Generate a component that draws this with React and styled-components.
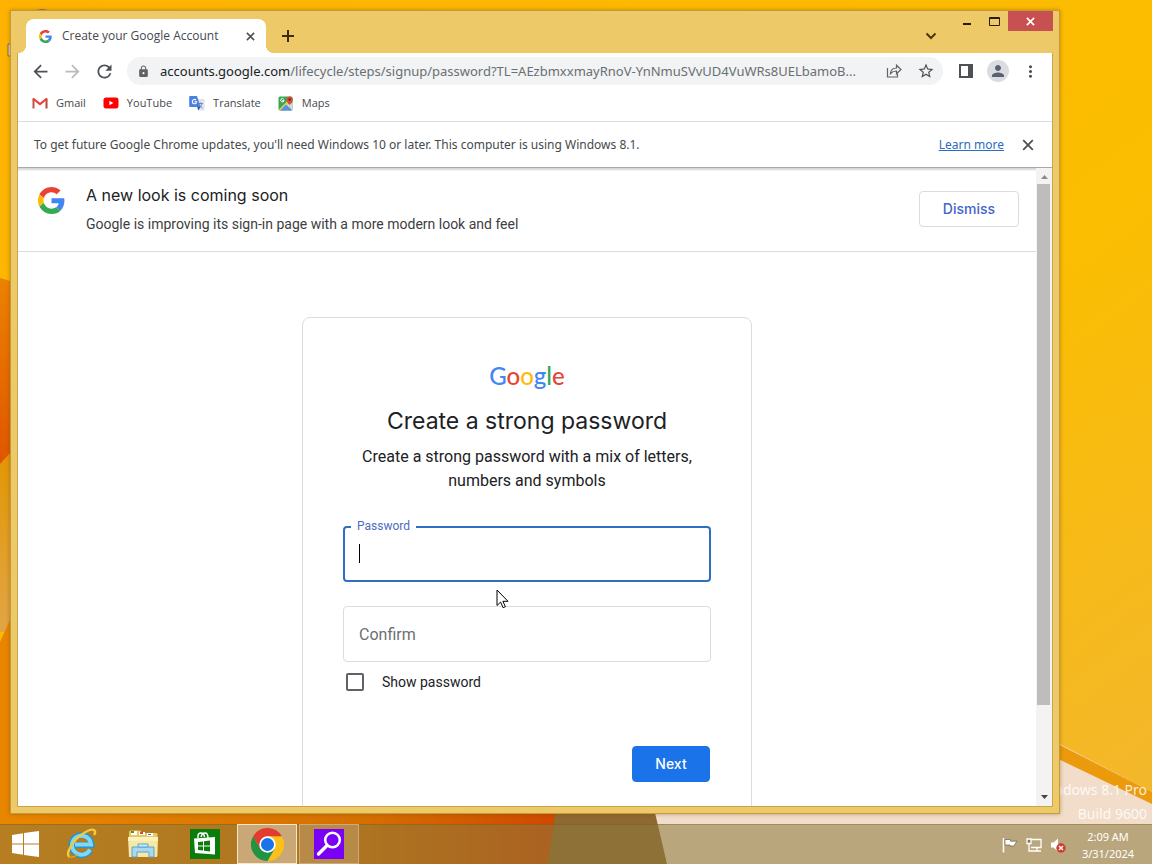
import { useState } from 'react';
import styled, { createGlobalStyle } from 'styled-components';
import { MdStarBorder, MdLock, MdMoreVert, MdPerson, MdRefresh, MdArrowBack, MdArrowForward } from 'react-icons/md';

const ui = `"Noto Sans", "Open Sans", sans-serif`;
const uiSmall = `"Open Sans", "Noto Sans", sans-serif`;
const product = `Inter, Roboto, sans-serif`;

const GlobalStyle = createGlobalStyle`
  * { box-sizing: border-box; }
  body { margin: 0; font-family: Roboto, sans-serif; color: #202124; }
  button { font: inherit; color: inherit; border: 0; padding: 0; background: none; }
  h1, h2, p { margin: 0; font-weight: 400; }
`;

const Desktop = styled.div`
  position: relative;
  display: flex;
  flex-direction: column;
  justify-content: flex-end;
  height: 100vh;
  overflow: hidden;
  background: #fbb800;
`;

const Wallpaper = styled.svg`
  position: absolute;
  inset: 0;
  width: 100%;
  height: 100%;
`;

const Watermark = styled.div`
  position: absolute;
  right: 5px;
  bottom: 38px;
  font: 14px/24px ${ui};
  text-align: right;
  color: rgba(255, 255, 255, 0.85);
`;

/* ---- browser window ---- */

const Window = styled.main`
  position: absolute;
  inset: 10px 92px 50px 10px;
  display: flex;
  flex-direction: column;
  padding: 0 7px 7px;
  background: #edc968;
  border: 1px solid #c39a3f;
  box-shadow: 0 0 4px rgba(110, 70, 0, 0.45);
`;

const TitleBar = styled.header`
  display: flex;
  align-items: flex-end;
  height: 42px;
  flex: none;
  padding-left: 8px;
`;

const Tab = styled.div`
  position: relative;
  display: flex;
  align-items: center;
  width: 240px;
  height: 34px;
  padding: 0 9px 0 13px;
  gap: 10px;
  background: #fff;
  border-radius: 8px 8px 0 0;
  font: 12px/16px ${uiSmall};
  color: #45494d;

  &::before, &::after {
    content: '';
    position: absolute;
    bottom: 0;
    width: 8px;
    height: 8px;
  }
  &::before { left: -8px; background: radial-gradient(circle at 0 0, transparent 8px, #fff 8px); }
  &::after { right: -8px; background: radial-gradient(circle at 100% 0, transparent 8px, #fff 8px); }
`;

const TabTitle = styled.span`
  flex: 1;
  white-space: nowrap;
`;

const IconButton = styled.button`
  display: flex;
  align-items: center;
  justify-content: center;
  flex: none;
  width: ${(p) => p.$w || 32}px;
  height: ${(p) => p.$h || 28}px;
  color: ${(p) => p.$color || '#4d5156'};
`;

const Caption = styled.div`
  display: flex;
  align-self: flex-start;
  margin: 0 -1px 0 8px;
`;

const CaptionButton = styled(IconButton)`
  background: ${(p) => (p.$close ? '#c75050' : 'none')};
`;

const Spacer = styled.div`
  flex: 1;
`;

const Client = styled.div`
  display: flex;
  flex-direction: column;
  flex: 1;
  min-height: 0;
  background: #fff;
  outline: 1px solid #c9a44c;
  clip-path: inset(0 -1px -1px -1px);
`;

const Toolbar = styled.nav`
  display: flex;
  align-items: center;
  flex: none;
  height: 36px;
  padding: 0 6px;
`;

const Omnibox = styled.div`
  display: flex;
  align-items: center;
  flex: 1;
  min-width: 0;
  height: 28px;
  margin: 0 7px;
  padding: 0 1px 0 10px;
  border-radius: 14px;
  background: #f1f3f4;
`;

const Url = styled.div`
  flex: 1;
  min-width: 0;
  margin-left: 10px;
  overflow: hidden;
  white-space: nowrap;
  font: 13px/20px ${ui};
  color: #6b6f73;

  b { font-weight: 400; color: #202124; }
`;

const Avatar = styled.span`
  display: flex;
  align-items: center;
  justify-content: center;
  width: 22px;
  height: 22px;
  border-radius: 50%;
  background: #dadce0;
  color: #5a6270;
`;

const Bookmarks = styled.nav`
  display: flex;
  flex: none;
  gap: 17px;
  height: 33px;
  padding: 5px 14px 0;
  border-bottom: 1px solid #dadce0;
`;

const Bookmark = styled.a`
  display: flex;
  align-items: center;
  gap: 8px;
  height: 18px;
  font: 11px/18px ${uiSmall};
  color: #45494d;
  text-decoration: none;
`;

const InfoBar = styled.div`
  display: flex;
  align-items: center;
  flex: none;
  height: 45px;
  padding: 0 8px 0 16px;
  font: 12px/20px ${ui};
  color: #45494d;

  a { color: #2a6cc0; margin-right: 8px; }
`;

const PageArea = styled.div`
  display: flex;
  flex: 1;
  min-height: 0;
  border-top: 1px solid #a9a9a9;
  box-shadow: inset 0 3px 2px -1px #d5d5d5;
`;

const Page = styled.div`
  flex: 1;
  min-width: 0;
  overflow: hidden;
`;

const ScrollBar = styled.div`
  display: flex;
  flex-direction: column;
  align-items: center;
  width: 16px;
  padding: 7px 0;
  background: #f3f3f3;
`;

const ScrollTrack = styled.div`
  flex: 1;
  align-self: stretch;
  margin: 5px 2px 5px 1px;
`;

const ScrollThumb = styled.div`
  height: 86%;
  background: #bdbdbd;
`;

const Banner = styled.section`
  display: flex;
  align-items: center;
  height: 84px;
  padding: 0 17px 2px 20px;
  border-bottom: 1px solid #dadce0;
`;

const BannerLogo = styled.div`
  display: flex;
  align-self: flex-start;
  width: 48px;
  padding-top: 19px;
`;

const BannerText = styled.div`
  flex: 1;

  h2 { font: 400 16px/24px ${product}; margin-bottom: 7px; }
  p { font-size: 14px; line-height: 20px; color: #3c4043; }
`;

const Button = styled.button`
  flex: none;
  min-width: 78px;
  height: 36px;
  padding: 0 ${(p) => (p.$primary ? 22 : 23)}px;
  border-radius: 4px;
  font: 500 14px/20px ${product};
  border: 1px solid ${(p) => (p.$primary ? '#1a73e8' : '#dadce0')};
  background: ${(p) => (p.$primary ? '#1a73e8' : '#fff')};
  color: ${(p) => (p.$primary ? '#fff' : '#4264c8')};
`;

const Card = styled.form`
  display: flex;
  flex-direction: column;
  width: 450px;
  max-width: 100%;
  min-height: 540px;
  margin: 65px auto 0;
  padding: 42px 40px 36px;
  border: 1px solid #dadce0;
  border-radius: 8px;
`;

const Wordmark = styled.div`
  text-align: center;
  font: 500 24px/32px Lato, sans-serif;
`;

const Letter = styled.span`
  color: ${(p) => p.$c};
`;

const Title = styled.h1`
  margin-top: 13px;
  text-align: center;
  font: 400 23px/32px ${product};
`;

const Subtitle = styled.p`
  margin: 8px 0 33px;
  text-align: center;
  font-size: 16px;
  line-height: 24px;
`;

const Field = styled.div`
  position: relative;
  height: 56px;
  margin-bottom: ${(p) => p.$gap}px;
`;

const FieldInput = styled.input`
  width: 100%;
  height: 100%;
  padding: 0 15px;
  border: ${(p) => (p.$active ? '2px solid #2f6fbf' : '1px solid #dadce0')};
  border-radius: 4px;
  outline: 0;
  font: 16px/24px Roboto, sans-serif;
  caret-color: transparent;

  &::placeholder { color: #6b6f73; opacity: 1; }
`;

const FloatingLabel = styled.label`
  position: absolute;
  left: 8px;
  top: -8px;
  padding: 0 6px;
  background: #fff;
  font-size: 12px;
  line-height: 16px;
  color: #4d6cc0;
`;

const Caret = styled.span`
  position: absolute;
  left: 16px;
  top: 18px;
  width: 1px;
  height: 19px;
  background: #000;
`;

const CheckRow = styled.label`
  display: flex;
  align-items: center;
  gap: 18px;
  height: 20px;
  padding-left: 3px;
  font-size: 14px;
  line-height: 20px;

  input {
    appearance: none;
    width: 18px;
    height: 18px;
    margin: 0;
    border: 2px solid #5f6368;
    border-radius: 2px;
  }
  input:checked { background: #1a73e8; border-color: #1a73e8; }
`;

const Actions = styled.div`
  display: flex;
  justify-content: flex-end;
  margin-top: 54px;
  padding-right: 1px;
`;

const Pointer = styled.svg`
  position: absolute;
  left: 496px;
  top: 589px;
`;

/* ---- taskbar ---- */

const Taskbar = styled.footer`
  position: relative;
  display: flex;
  align-items: stretch;
  height: 40px;
  background: rgba(140, 120, 60, 0.55);
  box-shadow: inset 0 1px 0 rgba(110, 85, 30, 0.35);
`;

const TaskButton = styled.button`
  display: flex;
  align-items: center;
  justify-content: center;
  width: ${(p) => (p.$start ? 50 : 60)}px;
  margin: 0 ${(p) => (p.$start ? 0 : 1)}px;
  border: ${(p) => (p.$active || p.$open ? '1px solid' : '0')};
  border-color: ${(p) => (p.$active ? '#f6e7c6' : '#cfa873')};
  background: ${(p) => (p.$active ? 'rgba(220,200,175,.6)' : p.$open ? 'rgba(200,170,130,.4)' : 'none')};
`;

const Tray = styled.div`
  display: flex;
  align-items: center;
  gap: 8px;
  padding: 1px 10px 0 0;
`;

const Clock = styled.time`
  width: 68px;
  text-align: center;
  font: 11px/17px ${ui};
  color: #fff;
`;

const GoogleG = ({ size }) => (
  <svg width={size} height={size} viewBox="0 0 48 48">
    <path fill="#EA4335" d="M24 9.5c3.54 0 6.71 1.22 9.21 3.6l6.85-6.85C35.9 2.38 30.47 0 24 0 14.62 0 6.51 5.38 2.56 13.22l7.98 6.19C12.43 13.72 17.74 9.5 24 9.5z" />
    <path fill="#4285F4" d="M46.98 24.55c0-1.57-.15-3.09-.38-4.55H24v9.02h12.94c-.58 2.96-2.26 5.48-4.78 7.18l7.73 6c4.51-4.18 7.09-10.36 7.09-17.65z" />
    <path fill="#FBBC05" d="M10.53 28.59c-.48-1.45-.76-2.99-.76-4.59s.27-3.14.76-4.59l-7.98-6.19C.92 16.46 0 20.12 0 24c0 3.88.92 7.54 2.56 10.78l7.97-6.19z" />
    <path fill="#34A853" d="M24 48c6.48 0 11.93-2.13 15.89-5.81l-7.73-6c-2.15 1.45-4.92 2.3-8.16 2.3-6.26 0-11.57-4.22-13.47-9.91l-7.98 6.19C6.51 42.62 14.62 48 24 48z" />
  </svg>
);

const Cross = ({ size, width = 2 }) => (
  <svg width={size} height={size} viewBox="0 0 10 10" stroke="currentColor" strokeWidth={width}>
    <path d="M1 1l8 8M9 1l-8 8" />
  </svg>
);

const GmailIcon = () => (
  <svg width="16" height="16" viewBox="0 0 16 16" fill="none">
    <path d="M1.5 13.5V3.5" stroke="#c5504a" strokeWidth="2" />
    <path d="M14.5 13.5V3.5" stroke="#b5453f" strokeWidth="2" />
    <path d="M1 3.5l7 5.5 7-5.5" stroke="#ea4335" strokeWidth="2.2" />
  </svg>
);

const YoutubeIcon = () => (
  <svg width="16" height="16" viewBox="0 0 16 16">
    <rect x="0.5" y="2.6" width="15" height="10.8" rx="2.6" fill="#f00" />
    <path d="M6.4 5.7v4.6l4-2.3z" fill="#fff" />
  </svg>
);

const TranslateIcon = () => (
  <svg width="16" height="16" viewBox="0 0 16 16">
    <path d="M6 4h8.5q1 0 1 1v9.5q0 1-1 1H10z" fill="#dfe3ea" />
    <path d="M9 8.5h5M11.5 7.5v1M13 8.5c-.5 2-2 3.500-3.500 4.500M10.500 10c.8 1.500 2 2.500 3 3" stroke="#7a8899" fill="none" />
    <path d="M1.200 1H8l3.500 11H1.200q-1 0-1-1V2q0-1 1-1z" fill="#4a80e0" />
    <path d="M8.200 12h3.300l-2.200 3.500z" fill="#2a56b8" />
    <path d="M7 5a2.200 2.200 0 1 0 .7 1.700H5.500" stroke="#fff" fill="none" strokeWidth="1.1" />
  </svg>
);

const MapsIcon = () => (
  <svg width="16" height="16" viewBox="0 0 16 16">
    <rect x="0.5" y="1.5" width="14" height="14" rx="1.5" fill="#3aa757" />
    <path d="M0.5 15L13 2.500l1.500 1.500L3 15.500z" fill="#f4d04c" />
    <path d="M2 15.500l6-6 6 6z" fill="#5a8fe8" />
    <path d="M8 9.500l6.500 6V8z" fill="#d5d8dc" />
    <path d="M5.800 4.200a1.700 1.700 0 1 0 .3 1.300H4.400" stroke="#fff" fill="none" />
    <path d="M11.600 11c-.3-2.700-3-3.500-3-6.300a3.100 3.100 0 0 1 6.200 0c0 2.800-2.900 3.600-3.200 6.300z" fill="#dd4b3e" />
    <circle cx="11.7" cy="4.5" r="1.2" fill="#7d2018" />
  </svg>
);

const ShareIcon = () => (
  <svg width="16" height="16" viewBox="0 0 16 16" fill="none" stroke="#5f6368" strokeWidth="1.2">
    <path d="M1.500 5v9h10v-3" />
    <path d="M4.500 10.500c.3-3.500 2.500-5.500 6-5.500V2.200l4.500 4.300-4.500 4.300V8c-2.500 0-4.500.8-6 2.500z" />
  </svg>
);

const StartIcon = () => (
  <svg width="27" height="26" viewBox="0 0 27 26" fill="#fff">
    <path d="M0 4l11-1.700v10.200H0zM12 2.100L27 0v12.500H12zM0 13.500h11v10.200L0 22zM12 13.500h15V26l-15-2.100z" />
  </svg>
);

const ExplorerIE = () => (
  <svg width="32" height="32" viewBox="0 0 32 32" fill="none">
    <path d="M25.500 21.500A10 10 0 1 1 26.500 17H9" stroke="#2a93c9" strokeWidth="6" />
    <path d="M25 21.500A9.500 9.500 0 1 1 26 16.500H10" stroke="#7fd9f5" strokeWidth="4" />
    <path d="M4.500 29C1 27 4 19 11 11.500S27 0 29.500 2.500c1 1 .5 3-.5 4.500" stroke="#f5c93a" strokeWidth="2.4" />
    <path d="M4.500 29c2 1 5.500-.5 8.500-2.500" stroke="#e0a21c" strokeWidth="1.5" />
  </svg>
);

const FolderIcon = () => (
  <svg width="32" height="30" viewBox="0 0 32 30">
    <path d="M2 3q0-1.500 1.500-1.500h10L15 4h14q1.500 0 1.500 1.500V27H2z" fill="#e8c765" />
    <path d="M4 2h6v4H4z" fill="#fff" /><path d="M4 2h3v2H4z" fill="#3f9b3a" />
    <path d="M12 3h6v3h-6z" fill="#fff" /><path d="M13 3h3v2h-3z" fill="#d9463a" />
    <path d="M20 4h6v3h-6z" fill="#fff" /><path d="M21 5h3v1h-3z" fill="#3a6fd0" />
    <path d="M1 8h30l-1 20H2z" fill="#f7e9a4" />
    <path d="M1 8h30v4H1z" fill="#fbf2c0" />
    <path d="M5 28V18h22v10h-5v-5H10v5z" fill="#a9d8f0" stroke="#5aa3d0" />
    <path d="M11 15h10v3H11z" fill="#cdeaf7" stroke="#5aa3d0" />
  </svg>
);

const StoreIcon = () => (
  <svg width="30" height="30" viewBox="0 0 30 30">
    <path d="M0 0h30v30H0z" fill="#0a7d0a" />
    <path d="M8 9V7q0-3 3-3t3.500 4M11 8q1-4 4-4t3 5" stroke="#fff" fill="none" strokeWidth="1.4" />
    <path d="M4 9.500L25 8v17.500L5 24z" fill="#fff" />
    <path d="M8 13l5-.6v4.100H8zM14 12.200l6-.7v5h-6zM8 17.500h5v4.100L8 21zM14 17.500h6v5l-6-.7z" fill="#0a7d0a" />
  </svg>
);

const ChromeIcon = () => (
  <svg width="33" height="33" viewBox="0 0 48 48">
    <path d="M24 12h20.800A24 24 0 0 1 24 48l10.400-18z" fill="#fbc116" />
    <path d="M13.600 30L3.200 12A24 24 0 0 0 24 48l10.400-18z" fill="#229342" />
    <path d="M3.200 12A24 24 0 0 1 44.800 12H24L13.600 30z" fill="#e33b2e" />
    <circle cx="24" cy="24" r="12" fill="#fff" />
    <circle cx="24" cy="24" r="9.5" fill="#1a73e8" />
  </svg>
);

const SearchIcon = () => (
  <svg width="30" height="30" viewBox="0 0 30 30">
    <path d="M0 0h30v30H0z" fill="#7a00f5" />
    <circle cx="18.5" cy="11" r="7.3" fill="none" stroke="#fff" strokeWidth="2.5" />
    <path d="M13 16.500L4.500 25" stroke="#fff" strokeWidth="3.4" strokeLinecap="round" />
  </svg>
);

const FlagIcon = () => (
  <svg width="16" height="16" viewBox="0 0 16 16">
    <path d="M1.500 1v14.500" stroke="#fff" strokeWidth="1.5" />
    <path d="M3 2.500h5.500v1.700H15L13 7l-1 2H8V8H3z" fill="#fff" stroke="#5f5130" strokeWidth=".6" />
  </svg>
);

const NetworkIcon = () => (
  <svg width="16" height="16" viewBox="0 0 16 16" fill="none" stroke="#fff" strokeWidth="1.3">
    <path d="M5 2.500h10v8H5M7 14h8M11 10.500V14M3 7v7h4" />
    <path d="M1 2h4v4.500H1z" fill="#8d7a4c" />
  </svg>
);

const VolumeIcon = () => (
  <svg width="16" height="16" viewBox="0 0 16 16">
    <path d="M1 5.500h2.500L8 1.500v13L3.500 10.500H1z" fill="#fff" />
    <circle cx="11" cy="11" r="4.7" fill="#cc3a30" />
    <path d="M9 9l4 4M13 9l-4 4" stroke="#fff" strokeWidth="1.4" />
  </svg>
);

const bookmarks = [
  { name: 'Gmail', icon: <GmailIcon /> },
  { name: 'YouTube', icon: <YoutubeIcon /> },
  { name: 'Translate', icon: <TranslateIcon /> },
  { name: 'Maps', icon: <MapsIcon /> },
];

const wordmark = [
  ['G', '#4285f4'], ['o', '#ea4335'], ['o', '#fbbc05'],
  ['g', '#4285f4'], ['l', '#34a853'], ['e', '#ea4335'],
];

function DesktopBackground() {
  return (
    <Wallpaper viewBox="0 0 1152 864" preserveAspectRatio="none">
      <defs>
        <linearGradient id="sky" x1="0" y1="0" x2="1" y2="1">
          <stop offset="0" stopColor="#ffb300" />
          <stop offset="0.6" stopColor="#fbbe00" />
          <stop offset="1" stopColor="#f2b632" />
        </linearGradient>
        <linearGradient id="red" x1="0" y1="0" x2="0" y2="1">
          <stop offset="0" stopColor="#ec8200" />
          <stop offset="1" stopColor="#e05500" />
        </linearGradient>
        <linearGradient id="gold" x1="0" y1="0" x2="0" y2="1">
          <stop offset="0" stopColor="#e29600" />
          <stop offset="1" stopColor="#e2a545" />
        </linearGradient>
        <linearGradient id="floor" x1="0" y1="0" x2="1" y2="0">
          <stop offset="0" stopColor="#e88600" />
          <stop offset="0.65" stopColor="#d57000" />
          <stop offset="1" stopColor="#cf4700" />
        </linearGradient>
      </defs>
      <path d="M0 0h1152v864H0z" fill="url(#sky)" />
      <path d="M0 278l20 6v170L0 466z" fill="url(#red)" />
      <path d="M0 464l20-22v190H0z" fill="url(#gold)" />
      <path d="M0 642l20-45v215h540l-12 52H0z" fill="url(#floor)" />
      <path d="M557 800h98l12 64H548z" fill="#8f6930" />
      <path d="M652 800l400-60 100 52v72H667z" fill="#f1ddca" />
      <path d="M1052 741l100 51v12l-100-48z" fill="#eb9a0c" />
      <path d="M32 12q10-6 20 0z" fill="#7c7a68" />
      <path d="M8 44h3v12H8z" fill="#e4d3b8" stroke="#8c6a30" />
    </Wallpaper>
  );
}

function SignupPage() {
  const [show, setShow] = useState(false);
  const type = show ? 'text' : 'password';

  return (
    <Page>
      <Banner>
        <BannerLogo><GoogleG size={27} /></BannerLogo>
        <BannerText>
          <h2>A new look is coming soon</h2>
          <p>Google is improving its sign-in page with a more modern look and feel</p>
        </BannerText>
        <Button type="button">Dismiss</Button>
      </Banner>
      <Card onSubmit={(e) => e.preventDefault()}>
        <Wordmark>
          {wordmark.map(([ch, color], i) => <Letter key={i} $c={color}>{ch}</Letter>)}
        </Wordmark>
        <Title>Create a strong password</Title>
        <Subtitle>Create a strong password with a mix of letters, numbers and symbols</Subtitle>
        <Field $gap={24}>
          <FieldInput id="password" type={type} $active />
          <FloatingLabel htmlFor="password">Password</FloatingLabel>
          <Caret />
        </Field>
        <Field $gap={10}>
          <FieldInput type={type} aria-label="Confirm" placeholder="Confirm" />
        </Field>
        <CheckRow>
          <input type="checkbox" checked={show} onChange={(e) => setShow(e.target.checked)} />
          Show password
        </CheckRow>
        <Actions>
          <Button type="submit" $primary>Next</Button>
        </Actions>
      </Card>
    </Page>
  );
}

function Browser() {
  return (
    <Window>
      <TitleBar>
        <Tab>
          <GoogleG size={13} />
          <TabTitle>Create your Google Account</TabTitle>
          <IconButton $w={14} $h={16} aria-label="Close tab"><Cross size={9} width={1.7} /></IconButton>
        </Tab>
        <IconButton $w={44} $h={34} $color="#3b2c10" aria-label="New tab">
          <svg width="12" height="12" viewBox="0 0 12 12" stroke="currentColor" strokeWidth="2"><path d="M6 0v12M0 6h12" /></svg>
        </IconButton>
        <Spacer />
        <IconButton $w={30} $h={34} $color="#4a3510" aria-label="Search tabs">
          <svg width="12" height="8" viewBox="0 0 12 8" fill="none" stroke="currentColor" strokeWidth="2"><path d="M1.500 1.500L6 6l4.500-4.500" /></svg>
        </IconButton>
        <Caption>
          <CaptionButton $w={26} $h={20} $color="#2b1c04" aria-label="Minimize">
            <svg width="10" height="10" viewBox="0 0 10 10"><path d="M1 7h8v2H1z" fill="currentColor" /></svg>
          </CaptionButton>
          <CaptionButton $w={28} $h={20} $color="#2b1c04" aria-label="Maximize">
            <svg width="11" height="9" viewBox="0 0 11 9" fill="none" stroke="currentColor"><path d="M.5.5h10v8H.5zM.5 1.500h10" /></svg>
          </CaptionButton>
          <CaptionButton $w={45} $h={20} $close $color="#fff" aria-label="Close">
            <Cross size={9} width={1.8} />
          </CaptionButton>
        </Caption>
      </TitleBar>
      <Client>
        <Toolbar>
          <IconButton aria-label="Back"><MdArrowBack size={21} /></IconButton>
          <IconButton $color="#b9bcbf" aria-label="Forward"><MdArrowForward size={21} /></IconButton>
          <IconButton aria-label="Reload"><MdRefresh size={21} /></IconButton>
          <Omnibox>
            <MdLock size={13} color="#5f6368" />
            <Url><b>accounts.google.com</b>/lifecycle/steps/signup/password?TL=AEzbmxxmayRnoV-YnNmuSVvUD4VuWRs8UELbamoB...</Url>
            <IconButton aria-label="Share"><ShareIcon /></IconButton>
            <IconButton aria-label="Bookmark"><MdStarBorder size={18} /></IconButton>
          </Omnibox>
          <IconButton aria-label="Side panel">
            <svg width="14" height="14" viewBox="0 0 14 14"><path d="M1 1h12v12H1z" fill="#fff" stroke="currentColor" strokeWidth="2" /><path d="M9 0h5v14H9z" fill="currentColor" /></svg>
          </IconButton>
          <IconButton aria-label="Profile"><Avatar><MdPerson size={18} /></Avatar></IconButton>
          <IconButton aria-label="Menu"><MdMoreVert size={19} /></IconButton>
        </Toolbar>
        <Bookmarks>
          {bookmarks.map((b) => <Bookmark key={b.name} href="#">{b.icon}{b.name}</Bookmark>)}
        </Bookmarks>
        <InfoBar>
          To get future Google Chrome updates, you'll need Windows 10 or later. This computer is using Windows 8.1.
          <Spacer />
          <a href="#">Learn more</a>
          <IconButton aria-label="Dismiss message"><Cross size={12} width={1.5} /></IconButton>
        </InfoBar>
        <PageArea>
          <SignupPage />
          <ScrollBar>
            <svg width="7" height="4" viewBox="0 0 7 4"><path d="M3.500 0L7 4H0z" fill="#8b8b8b" /></svg>
            <ScrollTrack><ScrollThumb /></ScrollTrack>
            <svg width="7" height="4" viewBox="0 0 7 4"><path d="M3.500 4L7 0H0z" fill="#444" /></svg>
          </ScrollBar>
        </PageArea>
      </Client>
    </Window>
  );
}

export default function App() {
  return (
    <Desktop>
      <GlobalStyle />
      <DesktopBackground />
      <Watermark>Windows 8.1 Pro<br />Build 9600</Watermark>
      <Browser />
      <Taskbar>
        <TaskButton $start aria-label="Start"><StartIcon /></TaskButton>
        <TaskButton aria-label="Internet Explorer"><ExplorerIE /></TaskButton>
        <TaskButton aria-label="File Explorer"><FolderIcon /></TaskButton>
        <TaskButton aria-label="Store"><StoreIcon /></TaskButton>
        <TaskButton $active aria-label="Google Chrome"><ChromeIcon /></TaskButton>
        <TaskButton $open aria-label="Search"><SearchIcon /></TaskButton>
        <Spacer />
        <Tray>
          <FlagIcon />
          <NetworkIcon />
          <VolumeIcon />
          <Clock>2:09 AM<br />3/31/2024</Clock>
        </Tray>
      </Taskbar>
      <Pointer width="13" height="20" viewBox="0 0 13 20">
        <path d="M1 1v15.500l3.600-3.400 2.500 5.600 2.300-1-2.500-5.400H12z" fill="#fff" stroke="#000" />
      </Pointer>
    </Desktop>
  );
}
